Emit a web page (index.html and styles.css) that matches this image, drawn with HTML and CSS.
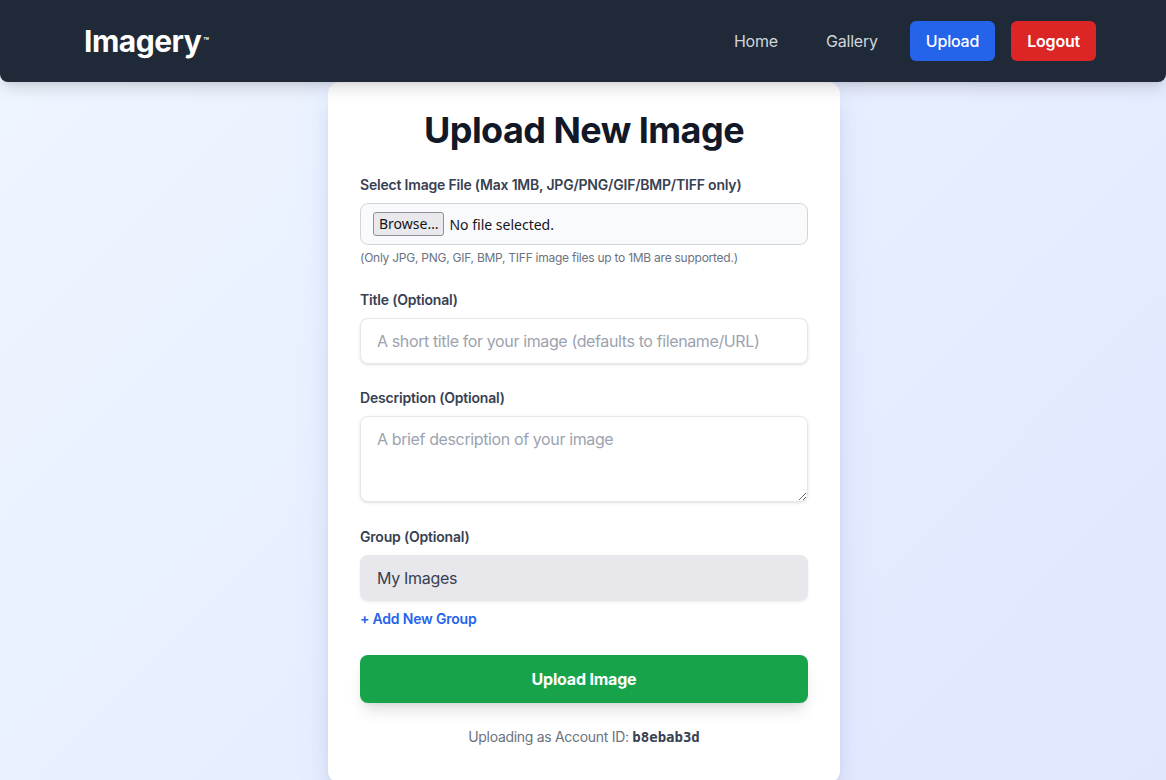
FILE: index.html
```html
<!DOCTYPE html>
<html lang="en">
<head>
    <meta charset="UTF-8">
    <meta name="viewport" content="width=device-width, initial-scale=1.0">
    <title>Imagery | Upload</title>
    <link rel="stylesheet" href="styles.css">
</head>
<body>
    <header class="topbar">
        <a href="#" class="logo">Imagery<sup>™</sup></a>
        <nav class="nav">
            <a href="#" class="nav-link">Home</a>
            <a href="#" class="nav-link">Gallery</a>
            <a href="#" class="nav-btn upload">Upload</a>
            <a href="#" class="nav-btn logout">Logout</a>
        </nav>
    </header>

    <main class="page">
        <form class="card" onsubmit="return false;">
            <h1>Upload New Image</h1>

            <div class="field">
                <label for="file">Select Image File (Max 1MB, JPG/PNG/GIF/BMP/TIFF only)</label>
                <label class="file-box" for="file">
                    <span class="browse">Browse…</span>
                    <span class="file-name">No file selected.</span>
                </label>
                <input type="file" id="file" class="file-hidden" accept="image/*">
                <p class="hint">(Only JPG, PNG, GIF, BMP, TIFF image files up to 1MB are supported.)</p>
            </div>

            <div class="field">
                <label for="title">Title (Optional)</label>
                <input type="text" id="title" class="input" placeholder="A short title for your image (defaults to filename/URL)">
            </div>

            <div class="field desc">
                <label for="desc">Description (Optional)</label>
                <textarea id="desc" class="input textarea" placeholder="A brief description of your image"></textarea>
            </div>

            <div class="field group">
                <label for="group">Group (Optional)</label>
                <select id="group" class="select">
                    <option>My Images</option>
                </select>
                <a href="#" class="add-group">+ Add New Group</a>
            </div>

            <button type="submit" class="submit">Upload Image</button>

            <p class="account">Uploading as Account ID: <code>b8ebab3d</code></p>
        </form>
    </main>
</body>
</html>
```

FILE: styles.css
```css
* {
    box-sizing: border-box;
}
body {
    margin: 0;
    font-family: 'Inter', 'Noto Sans', sans-serif;
    color: #1f2937;
    min-height: 100vh;
    background: linear-gradient(135deg, #eff6ff 0%, #e0e7ff 100%);
}

/* header */
.topbar {
    position: relative;
    z-index: 2;
    height: 82px;
    background: #1f2937;
    border-radius: 0 0 8px 8px;
    box-shadow: 0 10px 15px -3px rgba(0,0,0,0.12), 0 4px 6px -4px rgba(0,0,0,0.1);
    display: flex;
    align-items: center;
    justify-content: space-between;
    padding: 0 70px 0 84px;
}
.logo {
    color: #fff;
    font-size: 30px;
    font-weight: 700;
    text-decoration: none;
    letter-spacing: -0.5px;
}
.logo sup {
    font-size: 9px;
    font-weight: 700;
    vertical-align: 8px;
    margin-left: 2px;
    letter-spacing: 0;
}
.nav {
    display: flex;
    align-items: center;
    gap: 16px;
}
.nav a {
    text-decoration: none;
    font-size: 16px;
    line-height: 24px;
    padding: 8px 16px;
    border-radius: 6px;
    letter-spacing: -0.2px;
}
.nav-link {
    color: #d1d5db;
}
.nav-btn {
    color: #fff;
}
.nav-btn.upload {
    background: #2563eb;
    font-weight: 500;
}
.nav-btn.logout {
    background: #dc2626;
    font-weight: 600;
}

/* card */
.page {
    display: flex;
    justify-content: center;
    padding-left: 2px;
}
.card {
    width: 512px;
    background: #fff;
    border-radius: 12px;
    padding: 28px 32px 36px;
    box-shadow: 0 20px 25px -5px rgba(0,0,0,0.1), 0 8px 10px -6px rgba(0,0,0,0.1), 0 0 40px rgba(99,102,241,0.08);
}
.card h1 {
    margin: 0 0 25px;
    text-align: center;
    font-size: 36px;
    line-height: 40px;
    font-weight: 700;
    color: #111827;
    letter-spacing: -0.55px;
}
.field {
    margin-bottom: 24px;
}
.field > label:first-child {
    display: block;
    font-size: 14px;
    line-height: 20px;
    font-weight: 600;
    color: #374151;
    margin-bottom: 8px;
    letter-spacing: -0.2px;
}
.file-box {
    display: flex;
    align-items: center;
    height: 42px;
    padding: 0 12px;
    background: #f9fafb;
    border: 1px solid #d1d5db;
    border-radius: 8px;
    cursor: pointer;
    font-family: 'Noto Sans', sans-serif;
    font-size: 14px;
    color: #15141a;
}
.browse {
    display: inline-block;
    height: 24px;
    line-height: 22px;
    padding: 0 5px;
    background: #e9e9ed;
    border: 1px solid #8f8f9d;
    border-radius: 3px;
    margin-right: 5px;
}
.file-hidden {
    display: none;
}
.hint {
    margin: 5px 0 0;
    font-size: 12px;
    line-height: 16px;
    color: #6b7280;
    letter-spacing: -0.25px;
}
.input {
    display: block;
    width: 100%;
    height: 46px;
    padding: 10px 16px;
    font-family: inherit;
    font-size: 16px;
    color: #1f2937;
    border: 1px solid #e5e7eb;
    border-radius: 8px;
    box-shadow: 0 1px 3px rgba(0,0,0,0.12);
    outline: none;
    letter-spacing: -0.38px;
}
.input::placeholder {
    color: #9ca3af;
}
.textarea {
    height: 86px;
    padding-top: 11px;
    line-height: 22px;
    resize: vertical;
}
.field.desc {
    margin-bottom: 25px;
}
.field.group {
    margin-bottom: 26px;
}
.select {
    display: block;
    width: 100%;
    height: 46px;
    padding: 0 17px;
    font-family: inherit;
    font-size: 16px;
    color: #374151;
    background: #e8e8ec;
    border: none;
    border-radius: 8px;
    box-shadow: 0 1px 3px rgba(0,0,0,0.08);
    appearance: none;
    outline: none;
    letter-spacing: -0.3px;
}
.add-group {
    display: inline-block;
    margin-top: 8px;
    font-size: 14px;
    line-height: 20px;
    font-weight: 600;
    color: #2563eb;
    text-decoration: none;
    letter-spacing: -0.2px;
}
.submit {
    display: block;
    width: 100%;
    height: 48px;
    border: none;
    border-radius: 8px;
    background: #16a34a;
    color: #fff;
    font-family: inherit;
    font-size: 16px;
    font-weight: 700;
    cursor: pointer;
    letter-spacing: -0.2px;
    box-shadow: 0 10px 15px -3px rgba(0,0,0,0.12), 0 4px 6px -4px rgba(0,0,0,0.1);
}
.account {
    margin: 24px 0 0;
    text-align: center;
    font-size: 14px;
    line-height: 20px;
    color: #6b7280;
    letter-spacing: -0.3px;
}
.account code {
    font-family: 'DejaVu Sans Mono', 'Liberation Mono', monospace;
    font-weight: 700;
    color: #374151;
    font-size: 14px;
    letter-spacing: 0;
}
```
